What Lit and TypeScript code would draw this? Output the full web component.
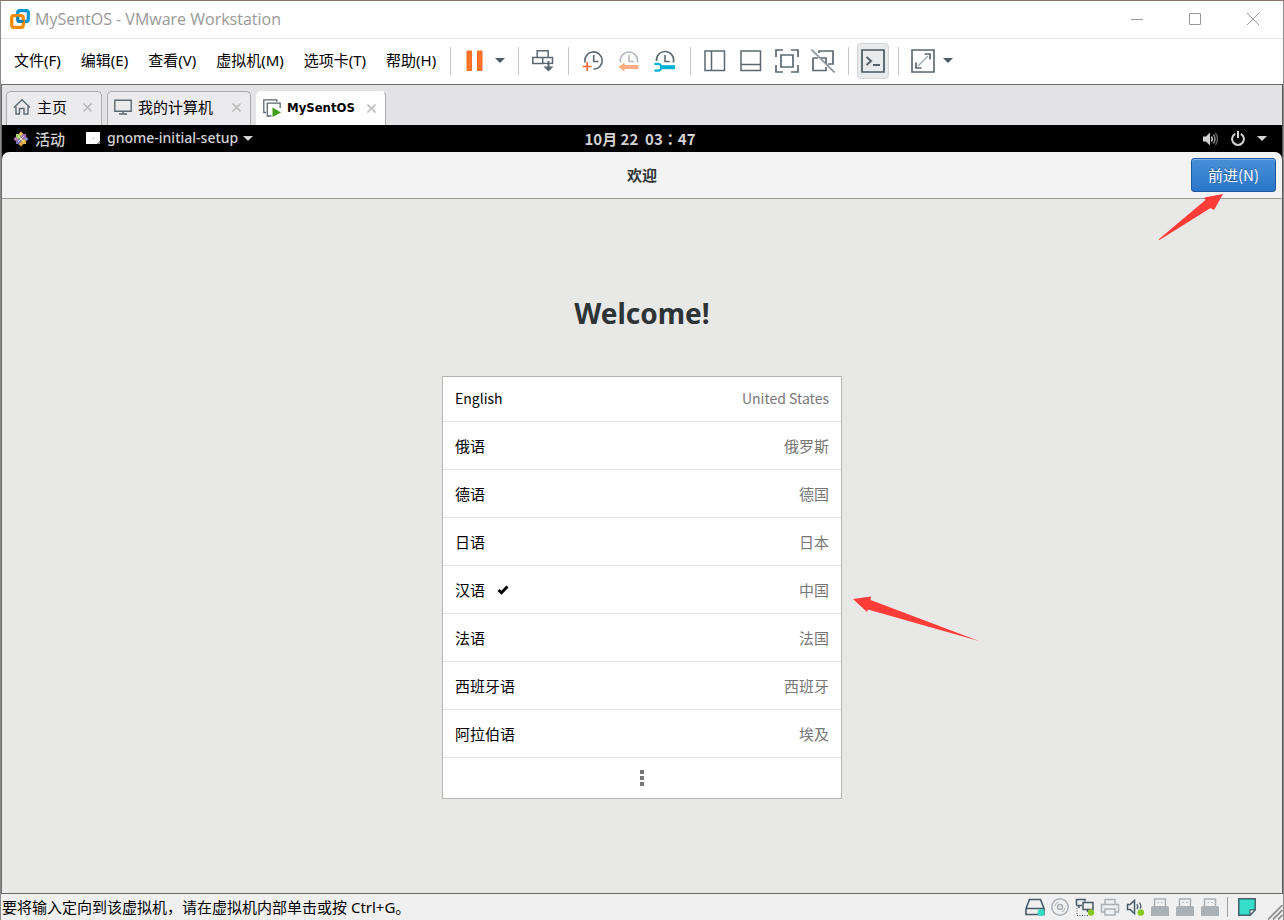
import { LitElement, html, svg, css, TemplateResult } from "lit";
import { customElement, state } from "lit/decorators.js";
import { classMap } from "lit/directives/class-map.js";

const icon = (w: number, h: number, body: TemplateResult) => html`
  <svg width=${w} height=${h} viewBox="0 0 ${w} ${h}" fill="none" aria-hidden="true">${body}</svg>
`;

const INK = "#5b6872";

const logo = icon(20, 20, svg`
  <rect x="7.7" y="1.7" width="10.6" height="10.6" rx="2" stroke="#0095d3" stroke-width="3.2"/>
  <rect x="1.7" y="6.7" width="11.6" height="11.6" rx="2" stroke="#f38b00" stroke-width="3.2"/>
  <path d="M7.7 7.5v4.8h5.8" stroke="#0a7cae" stroke-width="2"/>
`);

const caret = icon(10, 5, svg`<path d="M0 0h10L5 5z" fill="#4a5a66"/>`);
const lightCaret = icon(10, 5, svg`<path d="M0 0h10L5 5z" fill="#d3d3d3"/>`);

const pauseIcon = icon(18, 22, svg`
  <path d="M1 1h4.500v19.500H1zM11.500 1H16v19.500h-4.500z" fill="#ff7426" stroke="#f56c22"/>
`);

const keysIcon = icon(22, 22, svg`
  <g stroke=${INK} stroke-width="1.500">
    <path d="M5.200 7.500V.800h11v6.700M.800 7.500h19.700v6H.800zM10.700 7.500v6"/>
    <path d="M16.500 11v9" stroke-width="2"/>
  </g>
  <path d="M11.500 16.500h10l-5 5z" fill=${INK}/>
  <path d="M12 14.500h2.500M18.500 14.500h2" stroke="#fff" stroke-width="1"/>
`);

const snapshotIcon = icon(22, 22, svg`
  <path d="M3 12.500A8.700 8.700 0 1 1 11.500 19.300" stroke=${INK} stroke-width="1.600"/>
  <path d="M11.700 5v6.500h4.800" stroke=${INK} stroke-width="1.600"/>
  <path d="M5.200 12v9M.700 16.500h9" stroke="#f0692a" stroke-width="1.600"/>
`);

const revertIcon = icon(22, 22, svg`
  <path d="M2.500 12.500A8.600 8.600 0 1 1 19.300 12.500" stroke="#b4babf" stroke-width="1.600"/>
  <path d="M11 5v6.500h4.800" stroke="#b4babf" stroke-width="1.600"/>
  <path d="M.500 17l6-4.500v2.500h14v4h-14v2.500z" fill="#ffad85"/>
`);

const manageIcon = icon(22, 22, svg`
  <path d="M2.500 11A8.600 8.600 0 1 1 19.300 12.500" stroke=${INK} stroke-width="1.600"/>
  <path d="M11 5v6.500h4.800" stroke=${INK} stroke-width="1.600"/>
  <path d="M.500 13.800H4a3.400 3.400 0 0 1 0 6.800H.500" stroke="#00b2d6" stroke-width="2.200"/>
  <path d="M6 17.200h15" stroke="#00b2d6" stroke-width="4"/>
`);

const sidebarIcon = icon(22, 22, svg`<path d="M1 1h19.500v19.500H1zM7.500 1v19.500" stroke=${INK} stroke-width="1.500"/>`);
const thumbIcon = icon(22, 22, svg`<path d="M1 1h19.500v19.500H1zM1 14.500h19.500" stroke=${INK} stroke-width="1.500"/>`);
const fitIcon = icon(24, 24, svg`
  <path d="M1 8V1h7M16 1h7v7M23 16v7h-7M8 23H1v-7" stroke=${INK} stroke-width="1.700"/>
  <path d="M6 6h12v12H6z" stroke=${INK} stroke-width="1.700"/>
`);
const unityIcon = icon(24, 24, svg`
  <path d="M8 4V2h14v13h-5M2 9h5M2 9v12.500h13V18M9 9h6v6" stroke=${INK} stroke-width="1.700"/>
  <path d="M.500.500l23 23" stroke="#8b959c" stroke-width="1.600"/>
`);
const consoleIcon = icon(24, 24, svg`
  <path d="M1 1h22v22H1z" stroke="#465966" stroke-width="1.700"/>
  <path d="M5.500 8l4.500 4-4.500 4M12 16h7" stroke="#56636d" stroke-width="2"/>
`);
const fullIcon = icon(24, 24, svg`
  <path d="M1 1h22v22H1z" stroke="#56656f" stroke-width="1.600"/>
  <path d="M7 17L17 7" stroke="#a5adb2" stroke-width="1.500"/>
  <path d="M13.500 5h5.500v5.500M5 13.500V19h5.500" stroke=${INK} stroke-width="1.700"/>
`);

const homeIcon = icon(18, 18, svg`
  <path d="M1 9.500L9 1.700l8 7.800M3 8.500V16h3.500v-5.500h4.500V16H15V8.500" stroke=${INK} stroke-width="1.400"/>
`);
const monitorIcon = icon(18, 16, svg`
  <path d="M.800 1.300h16.400v11H.800z" stroke=${INK} stroke-width="1.400"/>
  <path d="M9 12v3M5 15h8" stroke=${INK} stroke-width="1.400"/>
`);
const vmIcon = icon(18, 18, svg`
  <path d="M3 13.500H.800V.800h13v2" stroke=${INK} stroke-width="1.300"/>
  <path d="M8.500 17H4.300V4.200h12.900V9" stroke=${INK} stroke-width="1.300"/>
  <path d="M9.500 8.500l8.500 5-8.500 4.500z" fill="#3f9c14"/>
`);
const closeIcon = icon(9, 9, svg`<path d="M.500.500l8 8M8.500.500l-8 8" stroke="#bdbdbd" stroke-width="1.600"/>`);

const centosIcon = icon(16, 16, svg`
  <path d="M3 3h4.500v4.500H3z" fill="#a6cf5a"/>
  <path d="M8.500 3H13v4.500H8.500z" fill="#a46bb0"/>
  <path d="M3 8.500h4.500V13H3z" fill="#7a6db5"/>
  <path d="M8.500 8.500H13V13H8.500z" fill="#e8b23c"/>
  <path d="M8 .500l2.300 2.300L8 5 5.700 2.800z" fill="#e9bd5a"/>
  <path d="M15.500 8l-2.300 2.300L11 8l2.200-2.300z" fill="#8a84c9"/>
  <path d="M8 15.500l-2.300-2.300L8 11l2.300 2.200z" fill="#e3a83c"/>
  <path d="M.500 8l2.300-2.300L5 8l-2.200 2.300z" fill="#b97bb9"/>
  <path d="M8 4v8M4 8h8M5 5l6 6M11 5l-6 6" stroke="#f2eee6" stroke-width=".8"/>
`);
const appIcon = icon(14, 12, svg`
  <path d="M0 0h14v9l-3 3H0z" fill="#fff"/><path d="M14 9v3h-3z" fill="#999"/><path d="M6 6.500h3M7.500 5v2" stroke="#ddd"/>
`);
const volumeIcon = icon(16, 14, svg`
  <path d="M0 4.500h3L7 .500v13L3 9.500H0z" fill="#d3d3d3"/>
  <path d="M8.500 4.500q1.500 2.500 0 5" stroke="#d3d3d3" stroke-width="1.500"/>
  <path d="M10.500 2.500q3 4.500 0 9" stroke="#8d8d8d" stroke-width="1.500"/>
  <path d="M12.500 1q4 6 0 12" stroke="#5c5c5c" stroke-width="1.500"/>
`);
const powerIcon = icon(14, 15, svg`
  <path d="M4.200 2.800a5.900 5.900 0 1 0 5.600 0" stroke="#d3d3d3" stroke-width="2"/>
  <path d="M7 0v7" stroke="#d3d3d3" stroke-width="2"/>
`);

const checkIcon = icon(12, 10, svg`<path d="M1.500 5l3 2.700 6-6.200" stroke="#000" stroke-width="3"/>`);
const moreIcon = icon(4, 16, svg`<path d="M0 0h4v4H0zM0 6h4v4H0zM0 12h4v4H0z" fill="#777"/>`);

const GREY = "#a9b0b6";
const usb = icon(20, 18, svg`
  <path d="M4.500 9V1h11v8" stroke=${GREY} stroke-width="1.500"/>
  <path d="M7.500 4.500h1.500M11 4.500h1.500" stroke=${GREY}/>
  <path d="M1 10q0-2 2-2h14q2 0 2 2v8H1z" fill=${GREY}/>
`);
const devices: { name: string; art: TemplateResult }[] = [
  { name: "硬盘", art: icon(20, 18, svg`
    <path d="M1 10.500L4.500 1.500h11l3.500 9v6H1zM1 10.500h18" stroke="#465966" stroke-width="1.600"/>
    <circle cx="16" cy="14.500" r="3.500" fill="#35dcc4"/>`) },
  { name: "CD/DVD", art: icon(20, 18, svg`
    <circle cx="10" cy="9" r="8.200" stroke=${GREY} stroke-width="1.500"/><circle cx="10" cy="9" r="2.500" stroke=${GREY} stroke-width="1.500"/>
    <path d="M5 8q.500-3 3.500-4M15 10q-.500 3-3.500 4" stroke=${GREY}/>`) },
  { name: "网络适配器", art: icon(20, 18, svg`
    <path d="M1.500 7.500v-6h8.500v2M1.500 7.500H7M4 7.500v2.500" stroke="#465966" stroke-width="1.500"/>
    <path d="M8 4.500h10v7H8zM12.500 11.500V14" stroke="#465966" stroke-width="1.500"/>
    <path d="M2 10v7.500h11" stroke="#465966" stroke-dasharray="1 1.500"/>
    <circle cx="16" cy="14.500" r="3.200" fill="#86c81e"/>`) },
  { name: "打印机", art: icon(20, 18, svg`
    <path d="M5 6V1.500h10V6M5 14H1.500V6.500h17V14H15M5 11h10v6H5z" stroke=${GREY} stroke-width="1.500"/>`) },
  { name: "声卡", art: icon(20, 18, svg`
    <path d="M2.500 6.500H5L9.500 2.500v13L5 11.500H2.500z" stroke="#465966" stroke-width="1.500"/>
    <path d="M12 6q1.500 2.500 0 5M14.500 4.500q2.500 4 .500 6" stroke="#465966" stroke-width="1.300"/>
    <circle cx="15.800" cy="14.500" r="3.200" fill="#86c81e"/>`) },
  { name: "USB 1", art: usb },
  { name: "USB 2", art: usb },
  { name: "USB 3", art: usb },
];
const noteIcon = icon(18, 18, svg`
  <path d="M.800.800h16.400v11L12 17.200H.800z" fill="#35dfc9" stroke="#43606c" stroke-width="1.500"/>
  <path d="M12 17v-5.200h5.200z" fill="#fff" stroke="#43606c" stroke-width="1.200"/>
`);
const gripIcon = icon(15, 15, svg`
  <path d="M0 14.500L14.500 0M5 14.500L14.500 5M10 14.500L14.500 10" stroke="#8f8f8f" stroke-width="1.800"/>
`);

const RED = "#fd3b37";

@customElement("app-root")
export class AppRoot extends LitElement {
  @state() private selected = "汉语";

  private menus = ["文件(F)", "编辑(E)", "查看(V)", "虚拟机(M)", "选项卡(T)", "帮助(H)"];

  private tabs = [
    { text: "主页", art: homeIcon, size: "" },
    { text: "我的计算机", art: monitorIcon, size: "wide" },
    { text: "MySentOS", art: vmIcon, size: "active" },
  ];

  private languages = [
    ["English", "United States"],
    ["俄语", "俄罗斯"],
    ["德语", "德国"],
    ["日语", "日本"],
    ["汉语", "中国"],
    ["法语", "法国"],
    ["西班牙语", "西班牙"],
    ["阿拉伯语", "埃及"],
  ];

  static styles = css`
    :host {
      display: flex;
      flex-direction: column;
      box-sizing: border-box;
      min-height: 100vh;
      border: 1px solid #8c8c8c;
      border-top-color: #8a7470;
      border-bottom-color: #6b5450;
      background: #fff;
      color: #000;
      font-family: "Noto Sans CJK SC", sans-serif;
      font-size: 15px;
      line-height: 20px;
    }
    * { box-sizing: border-box; }
    svg { display: block; flex: none; }
    button {
      font: inherit;
      color: inherit;
      background: none;
      border: 0;
      margin: 0;
      padding: 0;
      display: flex;
      align-items: center;
      justify-content: center;
      white-space: nowrap;
    }
    .titlebar {
      display: flex;
      align-items: center;
      height: 38px;
      padding: 0 1px 1px 9px;
      gap: 5px;
      border-bottom: 1px solid #e3e3e3;
      color: #999;
    }
    .title {
      flex: 1;
      margin: 0;
      font: 400 16px/20px "Open Sans", sans-serif;
    }
    .controls { display: flex; align-self: stretch; }
    .controls button { width: 58px; }
    .commands {
      display: flex;
      align-items: center;
      height: 45px;
      padding: 0 0 2px 4px;
    }
    .menu { display: flex; gap: 2px; font-family: "Noto Sans", "Noto Sans CJK SC", sans-serif; }
    .menu button { padding: 0 9px 2px; height: 28px; }
    .sep { width: 1px; height: 28px; margin: 0 6px 0 7px; background: #c8c8c8; }
    .menu + .sep { margin-left: 5px; }
    .tool { width: 36px; height: 36px; }
    .tool.on {
      width: 32px;
      margin: 0 2px;
      background: #e9eaeb;
      border: 1px solid #d2d4d5;
      border-radius: 4px;
    }
    .drop { height: 36px; padding: 0 6px 0 2px; }
    .viewport {
      flex: 1;
      display: flex;
      flex-direction: column;
      border: 1px solid #6a6a6a;
      border-right-color: #55585a;
    }
    .tabs {
      display: flex;
      align-items: flex-end;
      gap: 5px;
      height: 40px;
      padding-left: 4px;
      background: #e3e3e6;
    }
    .tab {
      display: flex;
      align-items: center;
      gap: 6px;
      height: 34px;
      min-width: 96px;
      padding: 0 9px 3px 6px;
      background: #ebebed;
      border: 1px solid #ababab;
      border-bottom: 0;
      border-radius: 5px 5px 0 0;
    }
    .tab.wide { min-width: 144px; }
    .tab.active {
      min-width: 130px;
      padding-bottom: 1px;
      background: #fff;
      border-color: #fff #ababab #fff #fff;
      font: 700 13px/20px "DejaVu Sans Condensed", "DejaVu Sans", sans-serif;
    }
    .tab .close { margin-left: auto; }
    .topbar {
      display: grid;
      grid-template-columns: 1fr auto 1fr;
      align-items: center;
      height: 27px;
      padding: 0 15px 0 11px;
      background: #000;
      color: #d3d3d3;
      font-size: 15px;
      font-weight: 500;
    }
    .topbar .start, .topbar .end { display: flex; align-items: center; }
    .topbar .start { gap: 21px; }
    .topbar .end { justify-content: flex-end; gap: 12px; }
    .activity { gap: 6px; }
    .app { gap: 7px; padding-bottom: 1px; font: 500 14px/20px "Noto Sans", sans-serif; }
    .app svg:last-child { margin-left: -2px; }
    .clock { font: 700 15px/20px "Noto Sans CJK TC", sans-serif; white-space: pre; }
    .stage { flex: 1; display: flex; flex-direction: column; background: #000; }
    .header {
      display: grid;
      grid-template-columns: 1fr auto 1fr;
      align-items: center;
      height: 47px;
      padding: 0 6px;
      background: #f3f3f3;
      border-bottom: 1px solid #989993;
      border-radius: 7px 7px 0 0;
    }
    .header h1 {
      grid-column: 2;
      margin: 0;
      color: #2e3436;
      font-size: 15px;
      font-weight: 700;
      line-height: 20px;
    }
    .next { position: relative; justify-self: end; }
    .next button {
      width: 85px;
      height: 34px;
      border: 1px solid #1c5a9f;
      border-radius: 3px;
      background: linear-gradient(#4a90d9, #2a76c8);
      box-shadow: inset 0 1px #7fb2e6;
      color: #fff;
      text-shadow: 0 -1px rgba(0, 0, 0, 0.4);
    }
    .arrow { position: absolute; pointer-events: none; }
    .next .arrow { right: 52px; top: 36px; }
    .row .arrow { left: calc(100% + 12px); top: 30px; }
    .content {
      flex: 1;
      display: flex;
      flex-direction: column;
      align-items: center;
      padding: 94px 16px;
      background: #e8e8e7;
    }
    .content h2 {
      margin: 0 0 43px;
      color: #2e3436;
      font: 700 28px/40px "Noto Sans", sans-serif;
    }
    .languages {
      width: 100%;
      max-width: 400px;
      margin: 0;
      padding: 0;
      list-style: none;
      background: #fff;
      border: 1px solid #b6b6b2;
    }
    .row { position: relative; border-bottom: 1px solid #e4e4e4; }
    .row button { width: 100%; height: 47px; padding: 1px 12px 0; gap: 12px; }
    .row:first-child button { height: 44px; padding: 0 12px 2px; font-size: 14px; }
    .row:last-child { border-bottom: 0; }
    .row:last-child button { height: 40px; padding-top: 0; }
    .country { margin-left: auto; color: #777; }
    .status {
      display: flex;
      align-items: center;
      height: 26px;
      padding-left: 1px;
      background: #f0f0f0;
    }
    .hint { flex: 1; font-family: "Noto Sans", "Noto Sans CJK SC", sans-serif; }
    .devices { display: flex; align-items: center; gap: 5px; }
    .status .sep { height: 20px; margin: 0 10px 0 7px; background: #a0a0a0; }
    .grip { align-self: flex-end; margin-left: 12px; }
  `;

  render() {
    const sep = html`<span class="sep"></span>`;
    const tool = (label: string, art: TemplateResult, on = false) =>
      html`<button class=${classMap({ tool: true, on })} aria-label=${label}>${art}</button>`;
    const drop = html`<button class="drop" aria-label="更多">${caret}</button>`;

    return html`
      <header class="titlebar">
        ${logo}
        <p class="title">MySentOS - VMware Workstation</p>
        <div class="controls">
          <button aria-label="最小化">${icon(12, 12, svg`<path d="M0 6.500h12" stroke="#999"/>`)}</button>
          <button aria-label="最大化">${icon(12, 12, svg`<path d="M.500.500h11v11H.500z" stroke="#999"/>`)}</button>
          <button aria-label="关闭">${icon(12, 12, svg`<path d="M0 0l12 12M12 0L0 12" stroke="#999"/>`)}</button>
        </div>
      </header>

      <div class="commands">
        <nav class="menu">${this.menus.map((m) => html`<button>${m}</button>`)}</nav>
        ${sep}${tool("挂起", pauseIcon)}${drop}
        ${sep}${tool("发送 Ctrl+Alt+Del", keysIcon)}
        ${sep}${tool("拍摄快照", snapshotIcon)}${tool("恢复快照", revertIcon)}${tool("管理快照", manageIcon)}
        ${sep}${tool("显示库", sidebarIcon)}${tool("缩略图栏", thumbIcon)}${tool("全屏", fitIcon)}${tool("Unity", unityIcon)}
        ${sep}${tool("控制台视图", consoleIcon, true)}
        ${sep}${tool("拉伸", fullIcon)}${drop}
      </div>

      <main class="viewport">
        <div class="tabs">
          ${this.tabs.map((t) => html`
            <div class="tab ${t.size}">
              ${t.art}<span>${t.text}</span>
              <button class="close" aria-label="关闭 ${t.text}">${closeIcon}</button>
            </div>`)}
        </div>

        <div class="topbar">
          <div class="start">
            <button class="activity">${centosIcon}<span>活动</span></button>
            <button class="app">${appIcon}<span>gnome-initial-setup</span>${lightCaret}</button>
          </div>
          <time class="clock" lang="zh-TW">10月 22  03：47</time>
          <div class="end">${volumeIcon}${powerIcon}${lightCaret}</div>
        </div>

        <div class="stage">
          <div class="header">
            <h1>欢迎</h1>
            <div class="next">
              <button>前进(N)</button>
              <svg class="arrow" width="66" height="48" viewBox="0 0 66 48" aria-hidden="true">
                <path d="M.500 45.500L47.500 6 46.500 3.500 65 0 56 16 52.500 14 1.500 46z" fill=${RED}/>
              </svg>
            </div>
          </div>

          <section class="content">
            <h2>Welcome!</h2>
            <ul class="languages">
              ${this.languages.map(([name, country]) => html`
                <li class="row">
                  <button
                    aria-pressed=${this.selected === name ? "true" : "false"}
                    @click=${() => (this.selected = name)}
                  >
                    <span>${name}</span>
                    ${this.selected === name ? checkIcon : ""}
                    <span class="country">${country}</span>
                  </button>
                  ${name === "汉语" ? html`
                    <svg class="arrow" width="128" height="46" viewBox="0 0 128 46" aria-hidden="true">
                      <path d="M0 3L18 .500 17.500 4 126 45 15 13.500 14 16z" fill=${RED}/>
                    </svg>` : ""}
                </li>`)}
              <li class="row"><button aria-label="更多语言">${moreIcon}</button></li>
            </ul>
          </section>
        </div>
      </main>

      <footer class="status">
        <span class="hint">要将输入定向到该虚拟机，请在虚拟机内部单击或按 Ctrl+G。</span>
        <div class="devices">${devices.map((d) => html`<button aria-label=${d.name}>${d.art}</button>`)}</div>
        ${sep}
        <button aria-label="消息日志">${noteIcon}</button>
        <span class="grip">${gripIcon}</span>
      </footer>
    `;
  }
}
